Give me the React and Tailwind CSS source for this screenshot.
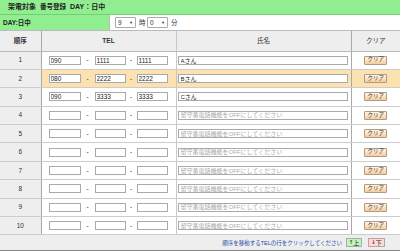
const rows = [
  { a: '090', b: '1111', c: '1111', name: 'Aさん' },
  { a: '080', b: '2222', c: '2222', name: 'Bさん', active: true },
  { a: '090', b: '3333', c: '3333', name: 'Cさん' },
  {}, {}, {}, {}, {}, {}, {},
]

function Box({ value, w }) {
  return (
    <input
      readOnly
      value={value || ''}
      className={`${w} h-[9px] border border-[#a9a9a9] bg-white px-[1px] text-[6.5px] leading-none text-[#222] outline-none`}
    />
  )
}

function Pick({ value, w }) {
  return (
    <div className={`${w} h-[11px] border border-[#aaa] rounded-[1px] bg-white flex items-center justify-between px-[2px] text-[6.5px]`}>
      <span>{value}</span>
      <span className="text-[4px]">▼</span>
    </div>
  )
}

export default function App() {
  return (
    <div className="w-[400px] h-[252px] overflow-hidden bg-white text-[#333] font-['Liberation_Sans','Noto_Sans_CJK_JP',sans-serif]">
      <div className="h-[15px] bg-[#90ee90] border-b border-[#74cf74] flex items-center pl-[8px] text-[7px] font-bold text-[#222]">
        <span>架電対象</span>
        <span className="ml-[4px] text-[6.5px]">番号登録</span>
        <span className="ml-[4px]">DAY：日中</span>
      </div>

      <div className="h-[16px] flex border-b border-[#bbb]">
        <div className="w-[110px] bg-[#90ee90] border-r border-[#bbb] flex items-center pl-[3px] text-[6.5px] font-bold text-[#222]">DAY:日中</div>
        <div className="flex items-center pl-[5px] text-[6.5px]">
          <Pick value="9" w="w-[21px]" />
          <span className="ml-[3px] w-[8px]">時</span>
          <Pick value="0" w="w-[21px]" />
          <span className="ml-[3px]">分</span>
        </div>
      </div>

      <table className="w-[400px] table-fixed border-collapse text-[6.5px]">
        <colgroup>
          <col className="w-[41px]" />
          <col className="w-[135px]" />
          <col className="w-[175px]" />
          <col className="w-[49px]" />
        </colgroup>
        <thead>
          <tr className="h-[20px] bg-[#eee] font-bold">
            <th className="p-0 border-r border-[#a8a8a8] border-b border-b-[#bbb]">順序</th>
            <th className="p-0 border-r border-[#c8c8c8] border-b border-b-[#bbb]">TEL</th>
            <th className="p-0 border-r border-[#a8a8a8] border-b border-b-[#bbb] font-normal">氏名</th>
            <th className="p-0 border-b border-[#bbb] font-normal">クリア</th>
          </tr>
        </thead>
        <tbody>
          {rows.map((r, i) => (
            <tr key={i} className={`h-[18.4px] ${r.active ? 'bg-[#fbe2b0]' : 'bg-white'}`}>
              <td className="p-0 bg-[#eee] border-r border-[#a8a8a8] border-b border-b-[#ccc] text-center">{i + 1}</td>
              <td className="p-0 border-r border-[#c8c8c8] border-b border-b-[#ccc]">
                <div className="flex items-center pl-[7px]">
                  <Box value={r.a} w="w-[32px]" />
                  <span className="w-[14px] text-center">-</span>
                  <Box value={r.b} w="w-[31px]" />
                  <span className="w-[11px] text-center">-</span>
                  <Box value={r.c} w="w-[31px]" />
                </div>
              </td>
              <td className="p-0 border-r border-[#a8a8a8] border-b border-b-[#ccc]">
                <div className="flex items-center pl-[1px]">
                  <input
                    readOnly
                    value={r.name || ''}
                    placeholder="留守番電話機能をOFFにしてください"
                    className="w-[170px] h-[9px] border border-[#a9a9a9] bg-white px-[2px] text-[6px] leading-none text-[#222] placeholder:text-[#aaa] outline-none"
                  />
                </div>
              </td>
              <td className="p-0 border-b border-[#ccc]">
                <div className="flex justify-center">
                  <button className="w-[23px] h-[9px] p-0 border border-[#b09a80] rounded-[1px] bg-linear-to-b from-[#fff6ec] to-[#f6cc9c] text-[5.5px] leading-none text-[#333]">クリア</button>
                </div>
              </td>
            </tr>
          ))}
          <tr className="h-[16px] bg-[#eee]">
            <td colSpan={4} className="p-0 border-b border-[#888]">
              <div className="flex items-center justify-end pr-[15px] gap-[4px]">
                <span className="text-[5.5px] text-[#2447a8]">順序を移動するTELの行をクリックしてください</span>
                <div className="w-[16px] h-[9px] border border-[#9ab59a] bg-[#c6f0c0] text-[6px] leading-none flex items-center justify-center whitespace-nowrap text-[#222]">
                  <span className="text-[#1b6b1b] font-bold font-['DejaVu_Sans',sans-serif] text-[5.5px]">↑</span>
                  <span>上</span>
                </div>
                <div className="ml-[2px] w-[17px] h-[9px] border border-[#c4a0a0] bg-[#fcdada] text-[6px] leading-none flex items-center justify-center whitespace-nowrap text-[#222]">
                  <span className="text-[#c02020] font-bold font-['DejaVu_Sans',sans-serif] text-[5.5px]">↓</span>
                  <span>下</span>
                </div>
              </div>
            </td>
          </tr>
        </tbody>
      </table>
    </div>
  )
}
